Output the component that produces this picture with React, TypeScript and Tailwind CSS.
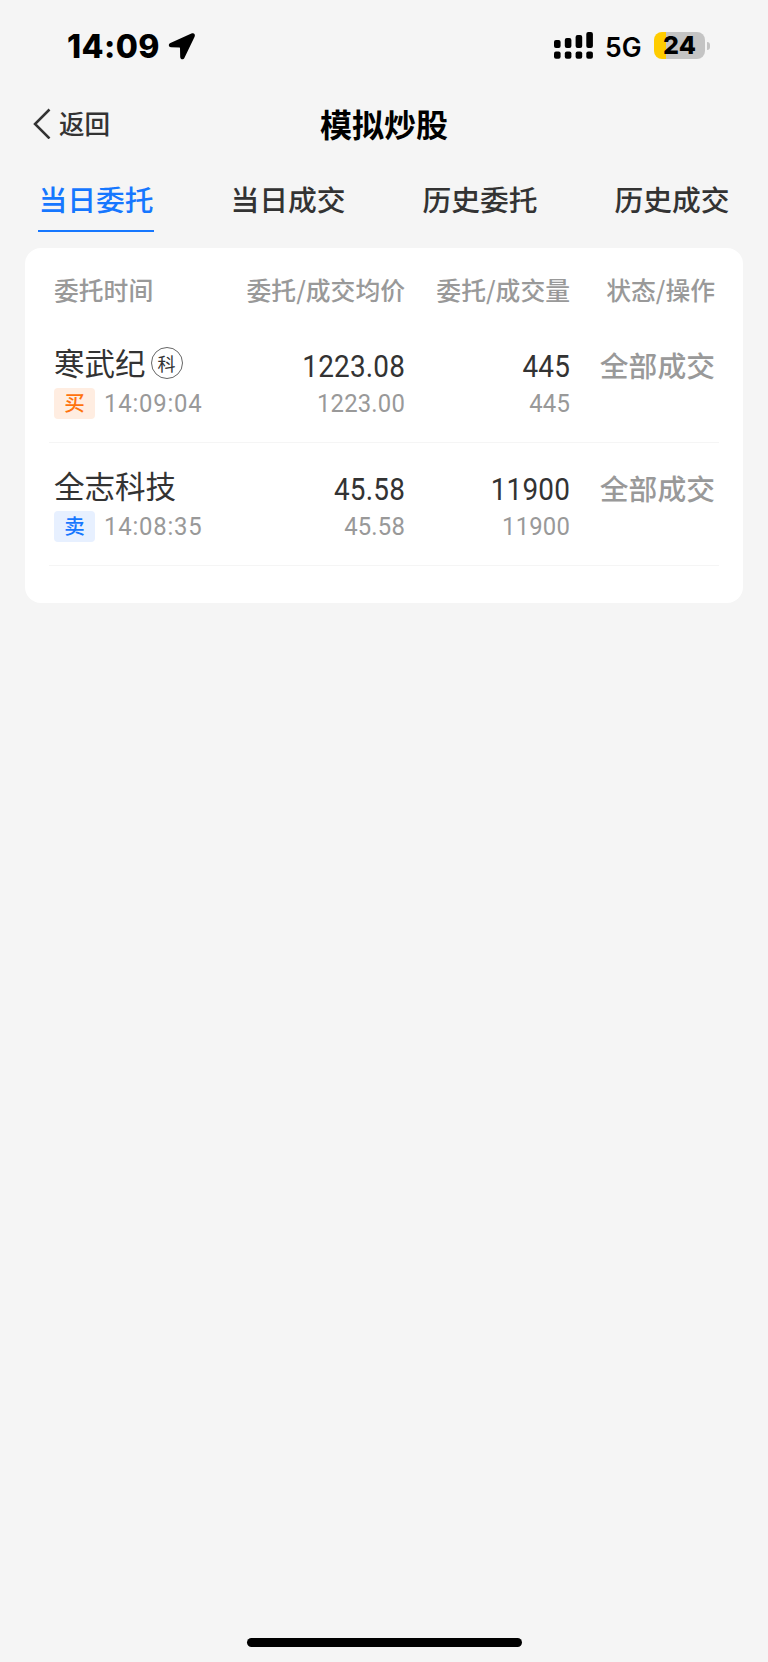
import clsx from "clsx";

type Order = {
  name: string;
  mark?: string;
  side: "buy" | "sell";
  time: string;
  price: string;
  avgPrice: string;
  volume: string;
  filled: string;
  status: string;
};

const tabs = ["当日委托", "当日成交", "历史委托", "历史成交"];

const orders: Order[] = [
  {
    name: "寒武纪",
    mark: "科",
    side: "buy",
    time: "14:09:04",
    price: "1223.08",
    avgPrice: "1223.00",
    volume: "445",
    filled: "445",
    status: "全部成交",
  },
  {
    name: "全志科技",
    side: "sell",
    time: "14:08:35",
    price: "45.58",
    avgPrice: "45.58",
    volume: "11900",
    filled: "11900",
    status: "全部成交",
  },
];

function StatusBar() {
  return (
    <div className="flex h-[93px] items-start justify-between pl-[67px] pr-[58px] font-['Inter'] text-black">
      <div className="flex items-start pt-[27px]">
        <span className="w-[93px] whitespace-nowrap text-[32px] leading-[40px] font-extrabold tracking-[0.4px]">
          14:09
        </span>
        <svg className="mt-[5px] ml-2 h-[29px] w-[28px]" viewBox="0 0 28 29">
          <path
            d="M23.4 1.6 2.4 11.1C0 12.2.5 15.2 3 15.3l8.2.2c.6 0 .8.2.8.8l.2 8.6c.1 2.6 3.2 3.2 4.3.8L26.6 4.8C27.7 2.3 25.8.5 23.4 1.6Z"
            fill="currentColor"
          />
        </svg>
      </div>

      <div className="flex items-start">
        <svg className="mt-8 h-[27px] w-[39px]" viewBox="0 0 39 27" fill="currentColor">
          <rect x="0" y="8" width="6.6" height="8" rx="2" />
          <rect x="10.8" y="6" width="6.6" height="10" rx="2" />
          <rect x="21.6" y="3" width="6.6" height="13" rx="2" />
          <rect x="32.3" y="0" width="6.6" height="16" rx="2" />
          <rect x="0" y="19.6" width="6.6" height="7.2" rx="2" />
          <rect x="10.8" y="19.6" width="6.6" height="7.2" rx="2" />
          <rect x="21.6" y="19.6" width="6.6" height="7.2" rx="2" />
          <rect x="32.3" y="19.6" width="6.6" height="7.2" rx="2" />
        </svg>
        <span className="mt-[31px] ml-3 w-[38px] whitespace-nowrap text-[26.5px] leading-8 font-semibold">
          5G
        </span>
        <div className="mt-8 ml-[11px] flex items-center">
          <div className="flex h-[27px] w-[51px] items-center justify-center rounded-lg bg-[linear-gradient(90deg,#ffcc00_12px,#c4c4c4_12px)] text-[25px] leading-none font-extrabold">
            24
          </div>
          <div className="ml-[2px] h-2 w-[3px] rounded-r-full bg-[#c4c4c4]" />
        </div>
      </div>
    </div>
  );
}

function NavBar() {
  return (
    <div className="grid h-[60px] grid-cols-[1fr_auto_1fr] items-center px-[33px]">
      <button className="flex items-center text-[#333]">
        <svg className="h-8 w-[18px]" viewBox="0 0 18 32" fill="none">
          <path d="M16.5 2.5 2 17l14.5 14.5" stroke="currentColor" strokeWidth="2.5" />
        </svg>
        <span className="ml-2 text-[25.6px] leading-8 font-medium">返回</span>
      </button>
      <h1 className="text-[32px] leading-10 font-bold text-black">模拟炒股</h1>
    </div>
  );
}

function OrderRow({ order }: { order: Order }) {
  const buy = order.side === "buy";
  return (
    <div className="grid h-[123px] grid-cols-[151px_200px_165px_145px] border-b border-[#f5f5f5] pt-6 pl-[5px]">
      <div>
        <div className="flex h-[43px] items-start whitespace-nowrap text-[30.5px] leading-[37px] text-[#333]">
          {order.name}
          {order.mark && (
            <span className="mt-[3px] ml-[5px] flex size-8 items-center justify-center rounded-full border border-[#666] text-[18px] leading-none">
              {order.mark}
            </span>
          )}
        </div>
        <div className="flex items-center">
          <span
            className={clsx(
              "flex h-[31px] w-[41px] shrink-0 items-center justify-center rounded pb-px text-[20.5px] leading-none font-medium",
              buy ? "bg-[#ffede1] text-[#ff720d]" : "bg-[#e7f0ff] text-[#1677ff]"
            )}
          >
            {buy ? "买" : "卖"}
          </span>
          <span className="ml-[9px] origin-left scale-x-90 font-['Roboto'] text-[26.5px] leading-8 font-[450] tracking-[0.9px] text-[#999]">
            {order.time}
          </span>
        </div>
      </div>

      <NumberPair top={order.price} bottom={order.avgPrice} />
      <NumberPair top={order.volume} bottom={order.filled} />

      <div className="pt-[2px] text-right text-[28.8px] leading-[38px] font-medium text-[#999]">
        {order.status}
      </div>
    </div>
  );
}

function NumberPair({ top, bottom }: { top: string; bottom: string }) {
  return (
    <div className="origin-right scale-x-90 text-right font-['Roboto'] font-[450]">
      <div className="h-[43px] pt-[5px] text-[31px] leading-9 tracking-[0.2px] text-[#333]">{top}</div>
      <div className="text-[26.5px] leading-8 tracking-[0.2px] text-[#999]">{bottom}</div>
    </div>
  );
}

export default function App() {
  return (
    <div className="flex h-[1662px] w-[768px] flex-col bg-[#f5f5f5] font-['Noto_Sans_CJK_SC',sans-serif]">
      <StatusBar />
      <NavBar />

      <div className="flex h-[95px] justify-between px-[38.4px] pt-[26px]">
        {tabs.map((tab, i) => (
          <button
            key={tab}
            className={clsx(
              "h-[53px] border-b-2 pb-[11px] text-[28.8px] leading-10 font-medium",
              i === 0 ? "border-[#1677ff] text-[#1677ff]" : "border-transparent text-[#333]"
            )}
          >
            {tab}
          </button>
        ))}
      </div>

      <div className="mx-[25px] h-[355px] rounded-2xl bg-white px-6">
        <div className="grid h-[72px] grid-cols-[151px_200px_165px_145px] pt-[23px] pl-[5px] text-right text-[24.8px] leading-9 font-medium whitespace-nowrap text-[#999]">
          <div className="text-left">委托时间</div>
          <div>委托/成交均价</div>
          <div>委托/成交量</div>
          <div>状态/操作</div>
        </div>
        {orders.map((order) => (
          <OrderRow key={order.name} order={order} />
        ))}
      </div>

      <div className="mx-auto mt-auto mb-[15px] h-[9px] w-[275px] rounded-full bg-black" />
    </div>
  );
}
